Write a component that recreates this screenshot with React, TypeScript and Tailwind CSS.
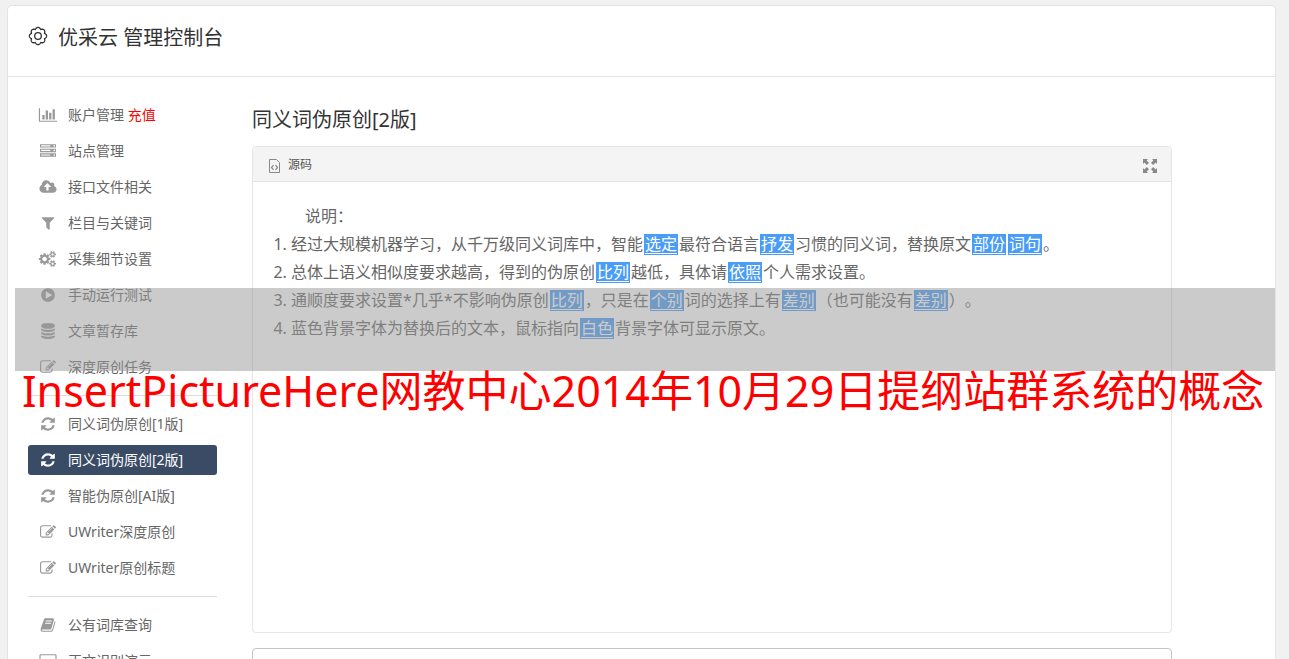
import React from 'react';

type Glyph = { w: number; d: string };

const glyphs: Record<string, Glyph> = {
  chart: {
    w: 2048,
    d: 'M640 896v512h-256v-512h256zm384-512v1024h-256v-1024h256zm1024 1152v128h-2048v-1536h128v1408h1920zm-640-896v768h-256v-768h256zm384-384v1152h-256v-1152h256z',
  },
  server: {
    w: 1792,
    d: 'M128 1408h1024v-128h-1024v128zm0-512h1024v-128h-1024v128zm1568 448q0-40-28-68t-68-28-68 28-28 68 28 68 68 28 68-28 28-68zm-1568-960h1024v-128h-1024v128zm1568 448q0-40-28-68t-68-28-68 28-28 68 28 68 68 28 68-28 28-68zm0-512q0-40-28-68t-68-28-68 28-28 68 28 68 68 28 68-28 28-68zm96 832v384h-1792v-384h1792zm0-512v384h-1792v-384h1792zm0-512v384h-1792v-384h1792z',
  },
  cloud: {
    w: 1920,
    d: 'M1280 864q0-14-9-23l-352-352q-9-9-23-9t-23 9l-351 351q-10 12-10 24 0 14 9 23t23 9h224v352q0 13 9.5 22.5t22.5 9.5h192q13 0 22.5-9.5t9.5-22.5v-352h224q13 0 22.5-9.5t9.5-22.5zm640 288q0 159-112.5 271.5t-271.5 112.5h-1088q-185 0-316.5-131.5t-131.5-316.5q0-130 70-240t188-165q-2-30-2-43 0-212 150-362t362-150q156 0 285.5 87t188.5 231q71-62 166-62 106 0 181 75t75 181q0 76-41 138 130 31 213.5 135.5t83.5 238.5z',
  },
  filter: {
    w: 1792,
    d: 'M1595 295q17 41-14 70l-493 493v742q0 42-39 59-13 5-25 5-27 0-45-19l-256-256q-19-19-19-45v-486l-493-493q-31-29-14-70 17-39 59-39h1280q42 0 59 39z',
  },
  cogs: {
    w: 1920,
    d: 'M832 896q0-106-75-181t-181-75-181 75-75 181 75 181 181 75 181-75 75-181zm768 512q0-52-38-90t-90-38-90 38-38 90q0 53 37.5 90.5t90.5 37.5 90.5-37.5 37.5-90.5zm0-1024q0-52-38-90t-90-38-90 38-38 90q0 53 37.5 90.5t90.5 37.5 90.5-37.5 37.5-90.5zm-384 421v185q0 10-7 19.5t-16 10.5l-155 24q-11 35-32 76 34 48 90 115 7 11 7 20 0 12-7 19-23 30-82.5 89.5t-78.5 59.5q-11 0-21-7l-115-90q-37 19-77 31-11 108-23 155-7 24-30 24h-186q-11 0-20-7.5t-10-17.5l-23-153q-34-10-75-31l-118 89q-7 7-20 7-11 0-21-8-144-133-144-160 0-9 7-19 10-14 41-53t47-61q-23-44-35-82l-152-24q-10-1-17-9.5t-7-19.5v-185q0-10 7-19.5t16-10.5l155-24q11-35 32-76-34-48-90-115-7-11-7-20 0-12 7-20 22-30 82-89t79-59q11 0 21 7l115 90q34-18 77-32 11-108 23-154 7-24 30-24h186q11 0 20 7.5t10 17.5l23 153q34 10 75 31l118-89q8-7 20-7 11 0 21 8 144 133 144 160 0 8-7 19-12 16-42 54t-45 60q23 48 34 82l152 23q10 2 17 10.5t7 19.5zm640 533v140q0 16-149 31-12 27-30 52 51 113 51 138 0 4-4 7-122 71-124 71-8 0-46-47t-52-68q-20 2-30 2t-30-2q-14 21-52 68t-46 47q-2 0-124-71-4-3-4-7 0-25 51-138-18-25-30-52-149-15-149-31v-140q0-16 149-31 13-29 30-52-51-113-51-138 0-4 4-7 4-2 35-20t59-34 30-16q8 0 46 46.5t52 67.5q20-2 30-2t30 2q51-71 92-112l6-2q4 0 124 70 4 3 4 7 0 25-51 138 17 23 30 52 149 15 149 31zm0-1024v140q0 16-149 31-12 27-30 52 51 113 51 138 0 4-4 7-122 71-124 71-8 0-46-47t-52-68q-20 2-30 2t-30-2q-14 21-52 68t-46 47q-2 0-124-71-4-3-4-7 0-25 51-138-18-25-30-52-149-15-149-31v-140q0-16 149-31 13-29 30-52-51-113-51-138 0-4 4-7 4-2 35-20t59-34 30-16q8 0 46 46.5t52 67.5q20-2 30-2t30 2q51-71 92-112l6-2q4 0 124 70 4 3 4 7 0 25-51 138 17 23 30 52 149 15 149 31z',
  },
  play: {
    w: 1792,
    d: 'M896 128q209 0 385.5 103t279.5 279.5 103 385.5-103 385.5-279.5 279.5-385.5 103-385.5-103-279.5-279.5-103-385.5 103-385.5 279.5-279.5 385.5-103zm384 823q32-18 32-55t-32-55l-544-320q-31-19-64-1-32 19-32 56v640q0 37 32 56 16 8 32 8 17 0 32-9z',
  },
  database: {
    w: 1792,
    d: 'M896 768q237 0 443-43t325-127v170q0 69-103 128t-280 93.5-385 34.5-385-34.5-280-93.5-103-128v-170q119 84 325 127t443 43zm0 768q237 0 443-43t325-127v170q0 69-103 128t-280 93.5-385 34.5-385-34.5-280-93.5-103-128v-170q119 84 325 127t443 43zm0-384q237 0 443-43t325-127v170q0 69-103 128t-280 93.5-385 34.5-385-34.5-280-93.5-103-128v-170q119 84 325 127t443 43zm0-1152q208 0 385 34.5t280 93.5 103 128v128q0 69-103 128t-280 93.5-385 34.5-385-34.5-280-93.5-103-128v-128q0-69 103-128t280-93.5 385-34.5z',
  },
  edit: {
    w: 1792,
    d: 'M888 1184l116-116-152-152-116 116v56h96v96h56zm440-720q-16-16-33 1l-350 350q-17 17-1 33t33-1l350-350q17-17 1-33zm80 594v190q0 119-84.5 203.5t-203.5 84.5h-832q-119 0-203.5-84.5t-84.5-203.5v-832q0-119 84.5-203.5t203.5-84.5h832q63 0 117 25 15 7 18 23 3 17-9 29l-49 49q-14 14-32 8-23-6-45-6h-832q-66 0-113 47t-47 113v832q0 66 47 113t113 47h832q66 0 113-47t47-113v-126q0-13 9-22l64-64q15-15 35-7t20 29zm-96-738l288 288-672 672h-288v-288zm444 132l-92 92-288-288 92-92q28-28 68-28t68 28l152 152q28 28 28 68t-28 68z',
  },
  refresh: {
    w: 1792,
    d: 'M1639 1056q0 5-1 7-64 268-268 434.5t-478 166.5q-146 0-282.5-55t-243.5-157l-129 129q-19 19-45 19t-45-19-19-45v-448q0-26 19-45t45-19h448q26 0 45 19t19 45-19 45l-137 137q71 66 161 102t187 36q134 0 250-65t186-179q11-17 53-117 8-23 30-23h192q13 0 22.5 9.5t9.5 22.5zm25-800v448q0 26-19 45t-45 19h-448q-26 0-45-19t-19-45 19-45l138-138q-148-137-349-137-134 0-250 65t-186 179q-11 17-53 117-8 23-30 23h-199q-13 0-22.5-9.5t-9.5-22.5v-7q65-268 270-434.5t480-166.5q146 0 284 55.5t245 156.5l130-129q19-19 45-19t45 19 19 45z',
  },
  book: {
    w: 1792,
    d: 'M1703 478q40 57 18 129l-275 906q-19 64-76.5 107.5t-122.5 43.5h-923q-77 0-148.5-53.5t-99.5-131.5q-24-67-2-127 0-4 3-27t4-37q1-8-3-21.5t-3-19.5q2-11 8-21t16.5-23.5 16.5-23.5q23-38 45-91.5t30-91.5q3-10 .5-30t-.5-28q3-11 17-28t17-23q21-36 42-92t25-90q1-9-2.5-32t.5-28q4-13 22-30.5t22-22.5q19-26 42.5-84.5t27.5-96.5q1-8-3-25.5t-2-26.5q2-8 9-18t18-23 17-21q8-12 16.5-30.5t15-35 16-36 19.5-32 26.5-23.5 36-11.5 47.5 5.5l-1 3q38-9 51-9h761q74 0 114 56t18 130l-274 906q-36 119-71.5 153.5t-128.5 34.5h-869q-27 0-38 15-11 16-1 43 24 70 144 70h923q29 0 56-15.5t35-41.5l300-987q7-22 5-57 38 15 59 43zm-1064 2q-4 13 2 22.5t20 9.5h608q13 0 25.5-9.5t16.5-22.5l21-64q4-13-2-22.5t-20-9.5h-608q-13 0-25.5 9.5t-16.5 22.5zm-83 256q-4 13 2 22.5t20 9.5h608q13 0 25.5-9.5t16.5-22.5l21-64q4-13-2-22.5t-20-9.5h-608q-13 0-25.5 9.5t-16.5 22.5z',
  },
  laptop: {
    w: 1920,
    d: 'M160 128h1600q66 0 113 47t47 113v1088q0 66-47 113t-113 47h-1600q-66 0-113-47t-47-113v-1088q0-66 47-113t113-47zm0 128q-13 0-22 10t-10 22v1088q0 13 10 22t22 10h1600q13 0 22-10t10-22v-1088q0-13-10-22t-22-10h-1600z',
  },
};

function Icon({ name }: { name: string }) {
  const g = glyphs[name];
  return (
    <svg aria-hidden="true" viewBox={`0 0 ${g.w} 1792`} className="h-4 w-full" fill="currentColor" fillRule="evenodd">
      <path d={g.d} />
    </svg>
  );
}

type Item = { icon: string; label: string; tag?: string; active?: boolean };

const groups: Item[][] = [
  [
    { icon: 'chart', label: '账户管理', tag: '充值' },
    { icon: 'server', label: '站点管理' },
    { icon: 'cloud', label: '接口文件相关' },
    { icon: 'filter', label: '栏目与关键词' },
    { icon: 'cogs', label: '采集细节设置' },
    { icon: 'play', label: '手动运行测试' },
    { icon: 'database', label: '文章暂存库' },
    { icon: 'edit', label: '深度原创任务' },
  ],
  [
    { icon: 'refresh', label: '同义词伪原创[1版]' },
    { icon: 'refresh', label: '同义词伪原创[2版]', active: true },
    { icon: 'refresh', label: '智能伪原创[AI版]' },
    { icon: 'edit', label: 'UWriter深度原创' },
    { icon: 'edit', label: 'UWriter原创标题' },
  ],
  [
    { icon: 'book', label: '公有词库查询' },
    { icon: 'laptop', label: '正文识别演示' },
  ],
];

function NavLink({ item }: { item: Item }) {
  return (
    <a
      href="#"
      aria-current={item.active ? 'page' : undefined}
      className={
        item.active
          ? 'flex h-[30px] items-center gap-2.5 rounded-[3px] bg-[#3a4b66] px-2.5 text-white'
          : 'flex h-[30px] items-center gap-2.5 rounded-[3px] px-2.5 text-[#666]'
      }
    >
      <span className={item.active ? 'flex w-5 shrink-0' : 'flex w-5 shrink-0 text-[#999]'}>
        <Icon name={item.icon} />
      </span>
      <span className="whitespace-nowrap">
        {item.label}
        {item.tag && <span className="text-[#f00]"> {item.tag}</span>}
      </span>
    </a>
  );
}

function Word({ children }: { children: React.ReactNode }) {
  return (
    <a href="#" className="mx-px inline-block h-[21px] bg-[#4a9df6] px-px align-baseline leading-[21px] text-white underline underline-offset-3">
      {children}
    </a>
  );
}

function gearPath() {
  const points: string[] = [];
  for (let i = 0; i <= 160; i++) {
    const a = (i / 160) * Math.PI * 2;
    const r = 7 + 1.6 * Math.abs(Math.cos(4 * a));
    points.push(`${(10 + r * Math.sin(a)).toFixed(2)} ${(10 - r * Math.cos(a)).toFixed(2)}`);
  }
  return `M${points.join('L')}Z`;
}

export default function App() {
  return (
    <div
      lang="zh-CN"
      className="relative h-screen overflow-hidden bg-[#f1f1f1] pt-[5px] pr-[13px] pl-[7px] font-['Noto_Sans','Noto_Sans_CJK_SC',sans-serif] text-sm"
    >
      <div className="min-h-full rounded-[5px] border border-[#e4e4e4] bg-white">
        <header className="flex h-[71px] items-start border-b border-[#e4e4e4] px-5 pt-[17px]">
          <h1 className="flex items-center gap-2.5 text-xl leading-[30px] text-[#333]">
            <svg aria-hidden="true" viewBox="0 0 20 20" className="mb-1 size-5" fill="none" stroke="currentColor" strokeWidth="1.3">
              <path d={gearPath()} strokeLinejoin="round" />
              <circle cx="10" cy="10" r="3.3" />
            </svg>
            优采云 管理控制台
          </h1>
        </header>

        <div className="flex gap-[35px] pt-[23px] pl-5">
          <nav className="flex w-[189px] shrink-0 flex-col">
            {groups.map((group, i) => (
              <div
                key={i}
                className={i > 0 ? 'mt-[13px] flex flex-col gap-1.5 border-t border-[#ddd] pt-[13px]' : 'flex flex-col gap-1.5'}
              >
                {group.map((item) => (
                  <NavLink key={item.label} item={item} />
                ))}
              </div>
            ))}
          </nav>

          <main className="mr-[103px] min-w-0 flex-1">
            <h2 className="pt-[5px] text-xl leading-[30px] text-[#333]">同义词伪原创[2版]</h2>
            <section className="mt-[11px] flex min-h-[487px] flex-col rounded-[4px] border border-[#e5e5e5]">
              <div className="flex h-[35px] items-center justify-between rounded-t-[3px] border-b border-[#e5e5e5] bg-[#f4f4f4] pt-0.5 pr-3.5 pl-4 text-[#555]">
                <button type="button" className="flex items-center gap-2 text-xs">
                  <svg aria-hidden="true" viewBox="0 0 11 14" className="mt-0.5 h-3.5 w-[11px] text-[#888]" fill="none" stroke="currentColor">
                    <path d="M.5.5h7l3 3v10H.5z" />
                    <path d="M4.500 6.200L2.500 8.500l2 2.300M6.500 6.200l2 2.300-2 2.300" strokeWidth="1.2" />
                  </svg>
                  源码
                </button>
                <button type="button" aria-label="全屏" className="mt-0.5 text-[#888]">
                  <svg aria-hidden="true" viewBox="0 0 14 14" className="size-3.5" fill="currentColor">
                    <path d="M0 0h5L3.600 1.400 6 3.800 3.800 6 1.400 3.600 0 5zM14 0v5l-1.400-1.400L10.200 6 8 3.800l2.400-2.400L9 0zM0 14V9l1.400 1.400L3.800 8 6 10.200l-2.400 2.400L5 14zM14 14H9l1.400-1.400L8 10.200 10.200 8l2.400 2.400L14 9z" />
                  </svg>
                </button>
              </div>
              <div className="px-5 pt-5 text-base leading-7 text-[#666] [text-spacing-trim:space-all]">
                <p className="indent-8">说明：</p>
                <ol className="list-decimal pl-[18px]">
                  <li>
                    经过大规模机器学习，从千万级同义词库中，智能<Word>选定</Word>最符合语言<Word>抒发</Word>
                    习惯的同义词，替换原文<Word>部份</Word><Word>词句</Word>。
                  </li>
                  <li>
                    总体上语义相似度要求越高，得到的伪原创<Word>比列</Word>越低，具体请<Word>依照</Word>个人需求设置。
                  </li>
                  <li>
                    通顺度要求设置*几乎*不影响伪原创<Word>比列</Word>，只是在<Word>个别</Word>词的选择上有
                    <Word>差别</Word>（也可能没有<Word>差别</Word>）。
                  </li>
                  <li>
                    蓝色背景字体为替换后的文本，鼠标指向<Word>白色</Word>背景字体可显示原文。
                  </li>
                </ol>
              </div>
            </section>
            <textarea aria-label="原文内容" className="mt-[15px] block h-40 w-full resize-none rounded-[4px] border border-[#c4c4c4] p-3 outline-none" />
          </main>
        </div>
      </div>

      <div className="pointer-events-none absolute top-72 right-3.5 left-[15px] h-[83px] bg-[#979797]/50" />
      <p className="pointer-events-none absolute top-[359px] left-[22px] text-[43px] leading-[64px] whitespace-nowrap text-[#f00]">
        InsertPictureHere网教中心2014年10月29日提纲站群系统的概念
      </p>
    </div>
  );
}
